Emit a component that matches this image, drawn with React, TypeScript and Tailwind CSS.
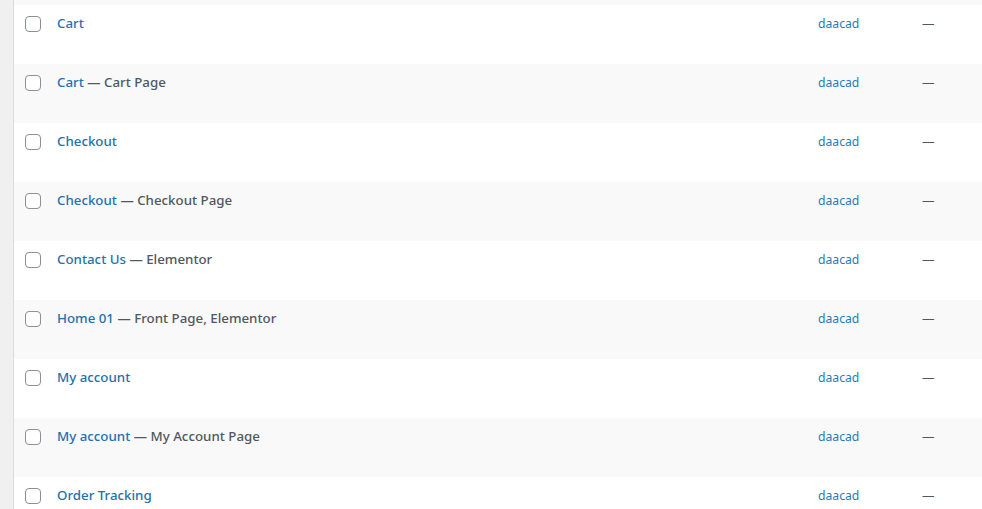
import React from "react";

const rows: { title: string; state?: string }[] = [
  { title: "Cart" },
  { title: "Cart", state: "Cart Page" },
  { title: "Checkout" },
  { title: "Checkout", state: "Checkout Page" },
  { title: "Contact Us", state: "Elementor" },
  { title: "Home 01", state: "Front Page, Elementor" },
  { title: "My account" },
  { title: "My account", state: "My Account Page" },
  { title: "Order Tracking" },
];

export default function App() {
  return (
    <div
      className="flex w-[982px] h-[509px] overflow-hidden bg-white"
      style={{ fontFamily: '"Noto Sans", "Open Sans", sans-serif' }}
    >
      <div className="w-[14px] shrink-0 bg-[#f0f0f0] border-r border-[#dcdcdc]" />
      <div className="flex-1 flex flex-col">
        <div className="h-[5px] shrink-0 bg-[#f9f9f9]" />
        {rows.map((r, i) => (
          <div
            key={i}
            className={`h-[59px] shrink-0 flex items-start ${i % 2 === 1 ? "bg-[#f9f9f9]" : "bg-white"}`}
          >
            <div className="w-[43px] shrink-0 pl-[11px] pt-[11px]">
              <div className="w-[16px] h-[16px] rounded-[4px] border border-[#8c8f94] bg-white" />
            </div>
            <div className="flex-1 pt-[8px] text-[13.3px] leading-[20px] font-medium text-[#50575e]">
              <span className="text-[#2271b1]">{r.title}</span>
              {r.state ? <span> — {r.state}</span> : null}
            </div>
            <div className="w-[104px] shrink-0 pt-[9px] text-[12.2px] leading-[20px] text-[#1f7bbb]">daacad</div>
            <div className="w-[60px] shrink-0 pt-[9px] text-[12.5px] leading-[20px] text-[#50575e]">—</div>
          </div>
        ))}
      </div>
    </div>
  );
}
